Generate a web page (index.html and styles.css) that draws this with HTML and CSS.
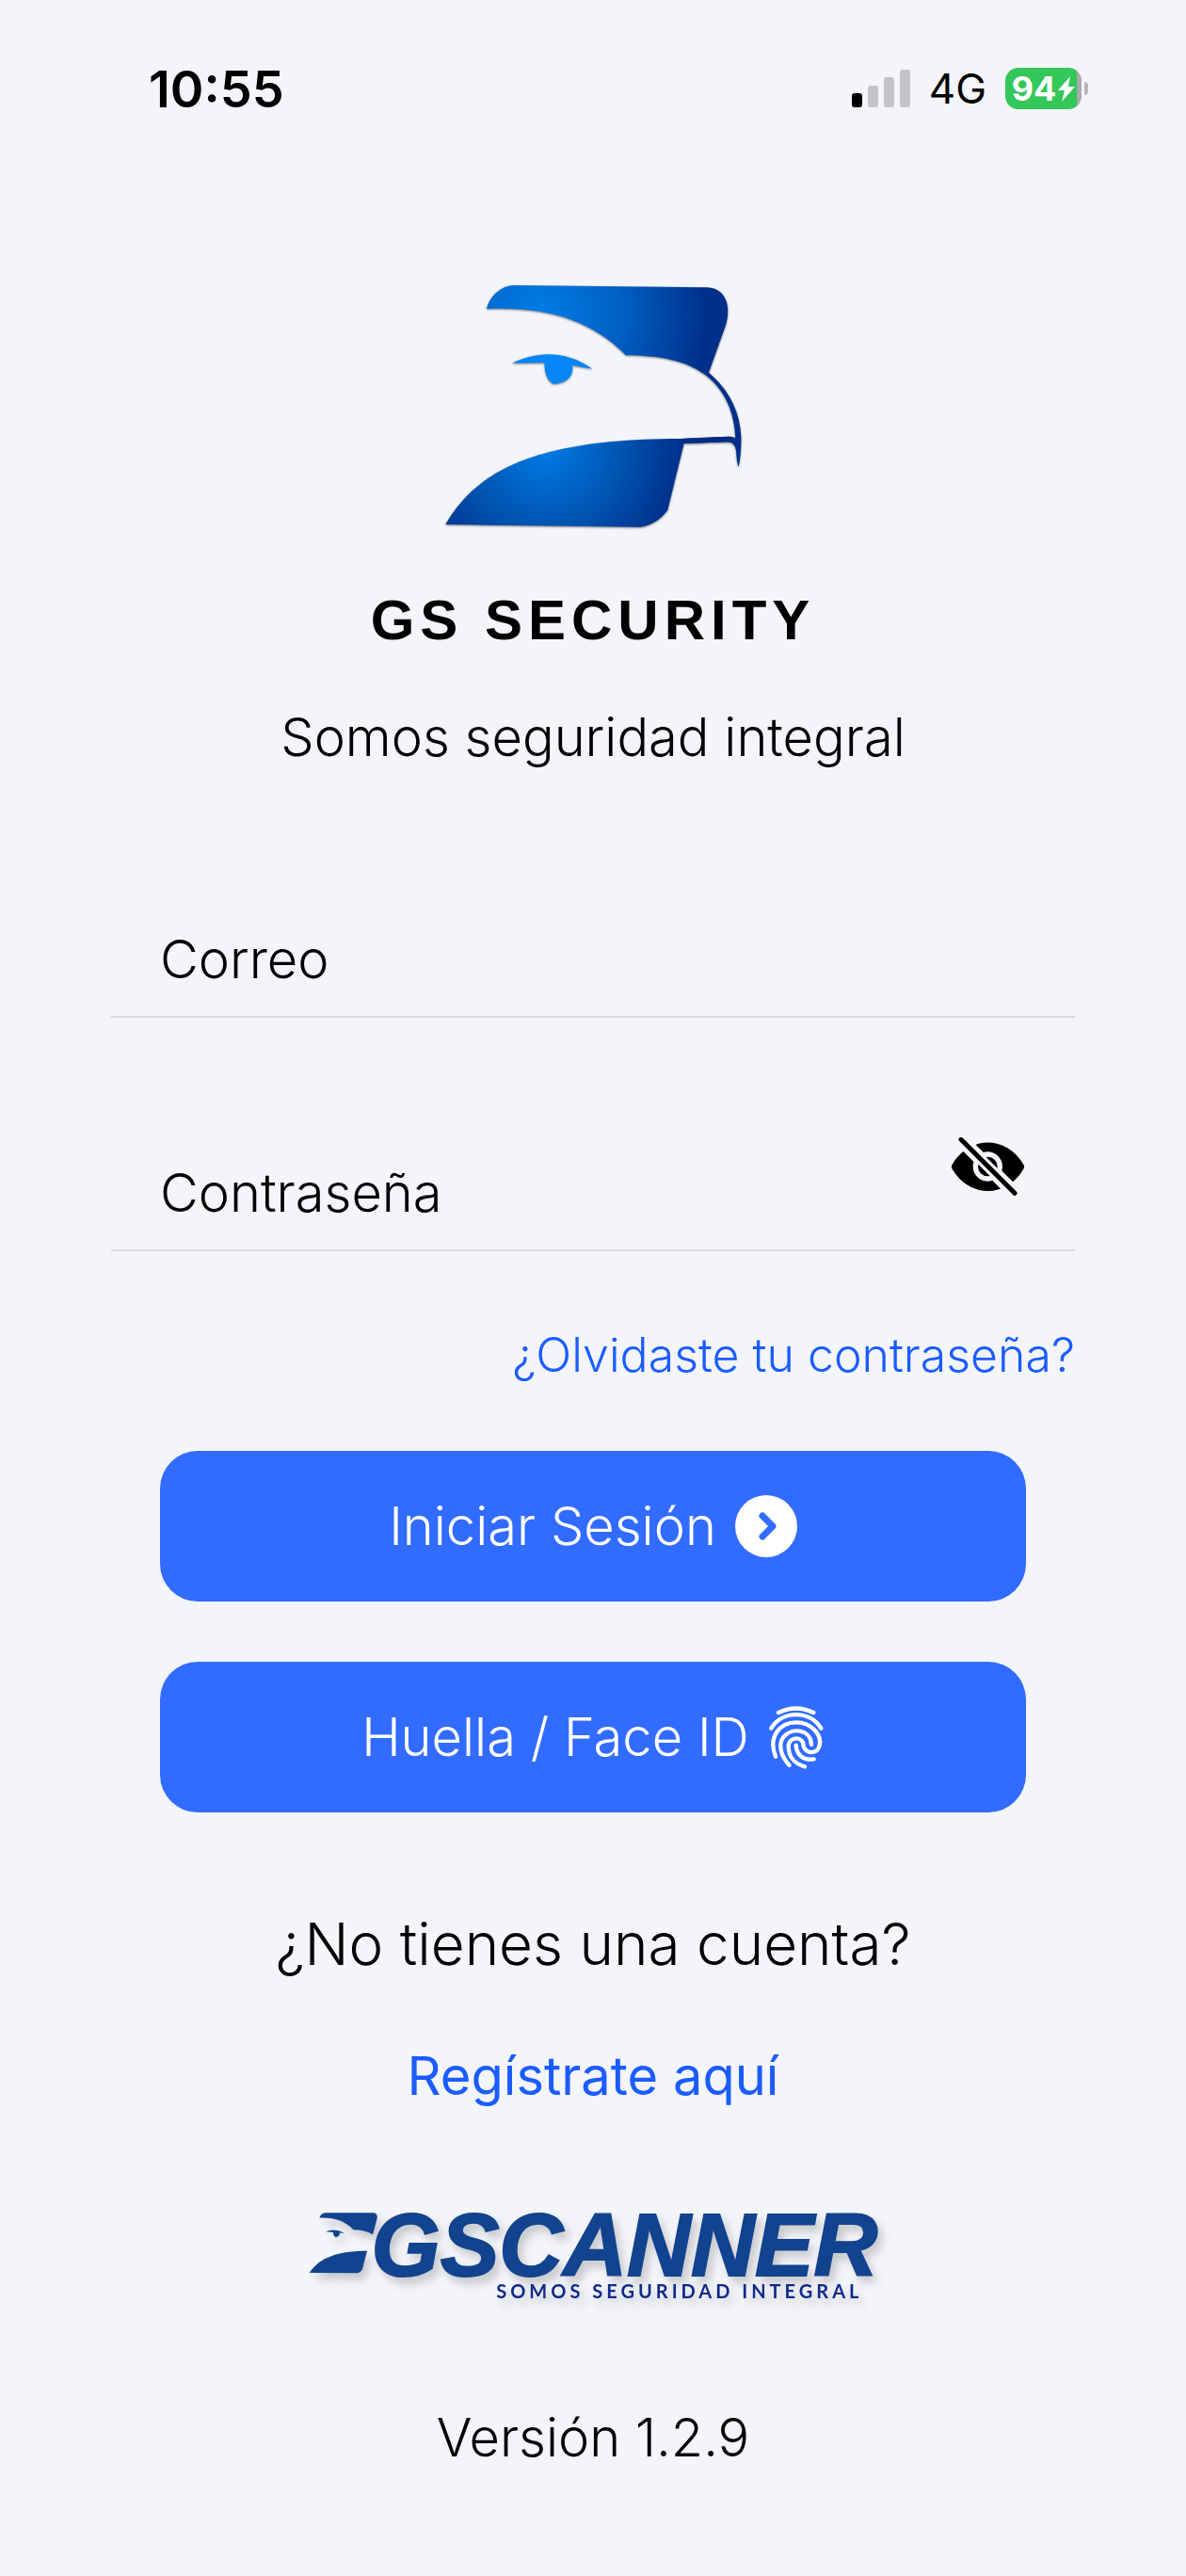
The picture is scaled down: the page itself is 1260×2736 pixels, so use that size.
FILE: index.html
```html
<!DOCTYPE html>
<html lang="es">
<head>
  <meta charset="UTF-8">
  <meta name="viewport" content="width=device-width, initial-scale=1">
  <title>GS Security</title>
  <link rel="stylesheet" href="styles.css">
</head>
<body>

  <!-- Status bar -->
  <header class="status-bar">
    <span class="time">10:55</span>
    <div class="status-icons">
      <svg class="signal" viewBox="0 0 62 40" aria-hidden="true">
        <rect x="0" y="25" width="11" height="15" rx="3" fill="#000"/>
        <rect x="17" y="17" width="11" height="23" rx="3" fill="#c3c4c7"/>
        <rect x="34" y="8" width="11" height="32" rx="3" fill="#c3c4c7"/>
        <rect x="51" y="0" width="11" height="40" rx="3" fill="#c3c4c7"/>
      </svg>
      <span class="network">4G</span>
      <div class="battery">
        <span class="battery-level">94<svg class="bolt" viewBox="0 0 18 27" aria-hidden="true"><path d="M13 0L0 15h7L4 27 18 11h-7z" fill="#fff"/></svg></span>
        <span class="battery-tip"></span>
      </div>
    </div>
  </header>

  <main class="login">

    <!-- Brand -->
    <svg class="logo" viewBox="92 90 960 790" role="img" aria-label="Logo GS Security">
      <defs>
        <radialGradient id="headFill" gradientUnits="userSpaceOnUse" cx="400" cy="190" r="540">
          <stop offset="0" stop-color="#007de6"/>
          <stop offset="0.5" stop-color="#005fc2"/>
          <stop offset="1" stop-color="#002f8a"/>
        </radialGradient>
        <radialGradient id="neckFill" gradientUnits="userSpaceOnUse" cx="420" cy="620" r="460">
          <stop offset="0" stop-color="#007be6"/>
          <stop offset="0.5" stop-color="#0056b4"/>
          <stop offset="1" stop-color="#002c86"/>
        </radialGradient>
      </defs>
      <path fill="url(#headFill)" d="M233 174C243 134 278 99 322 99L935 106C985 108 1006 145 1001 195Q1000 215 990 240L941 377C1006 432 1040 500 1044 580Q1045 635 1036 677Q1031 670 1028 625Q1024 598 1000 598L862 603V587L1000 581Q1015 580 1026 586C1023 500 990 430 931 385C865 337 785 323 677 322C570 212 430 165 233 174Z"/>
      <path fill="url(#neckFill)" d="M102 861C200 690 390 588 850 588L1005 582Q1022 583 1027 592L1028 610Q1021 598 1000 598L862 603L810 815Q775 862 722 869Z"/>
      <path fill="#0586f7" d="M314 347C395 308 485 305 570 365L506 354C512 390 485 412 446 413C426 404 418 380 417 346Z"/>
    </svg>
    <h1 class="brand">GS SECURITY</h1>
    <p class="slogan">Somos seguridad integral</p>

    <!-- Login form -->
    <form class="form">
      <div class="field">
        <input type="email" placeholder="Correo" aria-label="Correo">
      </div>
      <div class="field">
        <input type="password" placeholder="Contraseña" aria-label="Contraseña">
        <button type="button" class="toggle" aria-label="Mostrar contraseña">
          <svg viewBox="145 110 240 192" aria-hidden="true">
            <mask id="eyeCut">
              <rect x="140" y="100" width="250" height="210" fill="#fff"/>
              <circle cx="263" cy="206" r="47" fill="#000"/>
              <path d="M178 120L349 291" stroke="#000" stroke-width="43"/>
            </mask>
            <mask id="pupilCut">
              <rect x="140" y="100" width="250" height="210" fill="#fff"/>
              <path d="M178 120L349 291" stroke="#000" stroke-width="34"/>
            </mask>
            <path mask="url(#eyeCut)" d="M150 199C205 106 322 106 377 199Q382 206 377 214C322 307 205 307 150 214Q145 206 150 199Z"/>
            <circle mask="url(#pupilCut)" cx="263" cy="206" r="31"/>
            <path d="M178 120L349 291" stroke="#000" stroke-width="15" stroke-linecap="round"/>
          </svg>
        </button>
      </div>

      <a class="forgot" href="#">¿Olvidaste tu contraseña?</a>

      <div class="actions">
        <button type="submit" class="btn">
          Iniciar Sesión
          <svg class="arrow" viewBox="0 0 66 66" aria-hidden="true">
            <circle cx="33" cy="33" r="33" fill="#fff"/>
            <path d="M29 22L40 33 29 44" fill="none" stroke="#316bff" stroke-width="7" stroke-linecap="round" stroke-linejoin="round"/>
          </svg>
        </button>
        <button type="button" class="btn">
          Huella / Face ID
          <svg class="finger" viewBox="68 64 180 208" fill="none" stroke="#fff" stroke-width="13" stroke-linecap="round" aria-hidden="true">
            <path d="M101 90Q157 63 213 90"/>
            <path d="M78 140C114 82 201 82 237 140"/>
            <path d="M92 230C68 170 102 121 158 121C207 121 240 162 232 194C225 223 188 223 181 197C182 164 135 164 133 197C133 235 158 255 185 262"/>
            <path d="M136 258C107 227 100 190 117 168C145 134 205 144 206 192"/>
            <path d="M157 194C159 226 182 244 214 238"/>
          </svg>
        </button>
      </div>
    </form>

    <!-- Sign up -->
    <p class="question">¿No tienes una cuenta?</p>
    <a class="register" href="#">Regístrate aquí</a>

    <!-- Product logo -->
    <div class="product">
      <svg class="product-eagle" viewBox="70 90 232 200" aria-hidden="true">
        <path fill="#12438f" d="M104 109Q110 93 125 93L278 93Q291 95 289 110L275 162Q248 147 213 147C185 118 150 107 104 109Z"/>
        <path fill="#12438f" d="M257 215L242 272Q237 285 222 286L72 285C105 235 165 215 257 215Z"/>
        <path fill="#12438f" d="M124 153Q153 140 185 158L169 157Q170 169 157 171Q148 167 148 155Z"/>
      </svg>
      <div class="product-text">
        <span class="product-name">GSCANNER</span>
        <span class="product-slogan">SOMOS SEGURIDAD INTEGRAL</span>
      </div>
    </div>

    <p class="version">Versión 1.2.9</p>
  </main>

</body>
</html>
```
FILE: styles.css
```css
/* Global */
* {
  box-sizing: border-box;
}
body {
  margin: 0;
  background: #f4f5fa;
  color: #000;
  font-family: Inter, "Liberation Sans", sans-serif;
  font-weight: 300;
}
h1, p {
  margin: 0;
}
a {
  color: #1a5cff;
  text-decoration: none;
}
button {
  border: none;
  font: inherit;
  cursor: pointer;
}

/* Status bar */
.status-bar {
  display: flex;
  justify-content: space-between;
  align-items: center;
  height: 188px;
  padding: 0 104px 0 158px;
}
.time {
  font-size: 54px;
  font-weight: 600;
}
.status-icons {
  display: flex;
  align-items: center;
  gap: 20px;
}
.signal {
  width: 62px;
  height: 40px;
}
.network {
  font-size: 44px;
  font-weight: 400;
}
.battery {
  display: flex;
  align-items: center;
  gap: 3px;
}
.battery-level {
  display: flex;
  align-items: center;
  justify-content: center;
  gap: 2px;
  width: 81px;
  height: 44px;
  border-radius: 14px;
  background: linear-gradient(90deg, #34c759 94%, #a9abae 94%);
  color: #fff;
  font-size: 36px;
  font-weight: 700;
}
.bolt {
  width: 18px;
  height: 27px;
}
.battery-tip {
  width: 4px;
  height: 14px;
  border-radius: 0 4px 4px 0;
  background: #b4b6ba;
}

/* Page column */
.login {
  display: flex;
  flex-direction: column;
  align-items: center;
  padding: 112px 118px 96px;
}

/* Brand */
.logo {
  width: 320px;
  filter: drop-shadow(0 1px 1px rgba(0,0,0,0.5));
}
.brand {
  margin-top: 60px;
  font-family: "Liberation Sans", Arial, sans-serif;
  font-size: 60px;
  font-weight: 700;
  line-height: 72px;
  letter-spacing: 6px;
}
.slogan {
  margin-top: 52px;
  font-size: 56px;
  line-height: 72px;
}

/* Form */
.form {
  display: flex;
  flex-direction: column;
  width: 100%;
  margin-top: 122px;
}
.field {
  display: flex;
  height: 140px;
  padding: 0 52px;
  border-bottom: 2px solid #d8d8dd;
}
.field + .field {
  margin-top: 108px;
}
.field input {
  flex: 1;
  min-width: 0;
  height: 80px;
  margin-top: 38px;
  padding: 0;
  border: none;
  outline: none;
  background: transparent;
  font: inherit;
  font-size: 56px;
}
.field input::placeholder {
  color: #000;
  opacity: 1;
}
.toggle {
  align-self: flex-start;
  width: 80px;
  height: 64px;
  margin-top: 18px;
  padding: 0;
  background: transparent;
}
.toggle svg {
  display: block;
  width: 80px;
  height: 64px;
}
.forgot {
  align-self: flex-end;
  margin-top: 80px;
  font-size: 50px;
  line-height: 60px;
}

/* Buttons */
.actions {
  display: flex;
  flex-direction: column;
  gap: 64px;
  margin-top: 72px;
  padding: 0 52px;
}
.btn {
  display: flex;
  align-items: center;
  justify-content: center;
  gap: 20px;
  height: 160px;
  border-radius: 40px;
  background: #316bff;
  color: #fff;
  font-size: 56px;
}
.arrow {
  width: 66px;
  height: 66px;
}
.finger {
  width: 60px;
  height: 70px;
}

/* Sign up */
.question {
  margin-top: 104px;
  font-size: 62px;
  line-height: 72px;
}
.register {
  margin-top: 68px;
  font-size: 56px;
  font-weight: 400;
  line-height: 72px;
}

/* Product logo */
.product {
  display: flex;
  margin-top: 108px;
  color: #12438f;
  filter: drop-shadow(5px 7px 5px rgba(0,0,0,0.18));
}
.product-eagle {
  width: 77px;
  height: 67px;
}
.product-text {
  display: flex;
  flex-direction: column;
  margin-left: -10px;
  font-family: "Liberation Sans", Arial, sans-serif;
  font-weight: 700;
}
.product-name {
  font-size: 94px;
  font-style: italic;
  line-height: 72px;
  -webkit-text-stroke: 2px #12438f;
}
.product-slogan {
  align-self: flex-end;
  margin-right: 16px;
  font-family: Lato, sans-serif;
  font-size: 20px;
  line-height: 24px;
  letter-spacing: 4px;
  color: #10298a;
}

.version {
  margin-top: 108px;
  font-size: 56px;
  line-height: 72px;
}
```
